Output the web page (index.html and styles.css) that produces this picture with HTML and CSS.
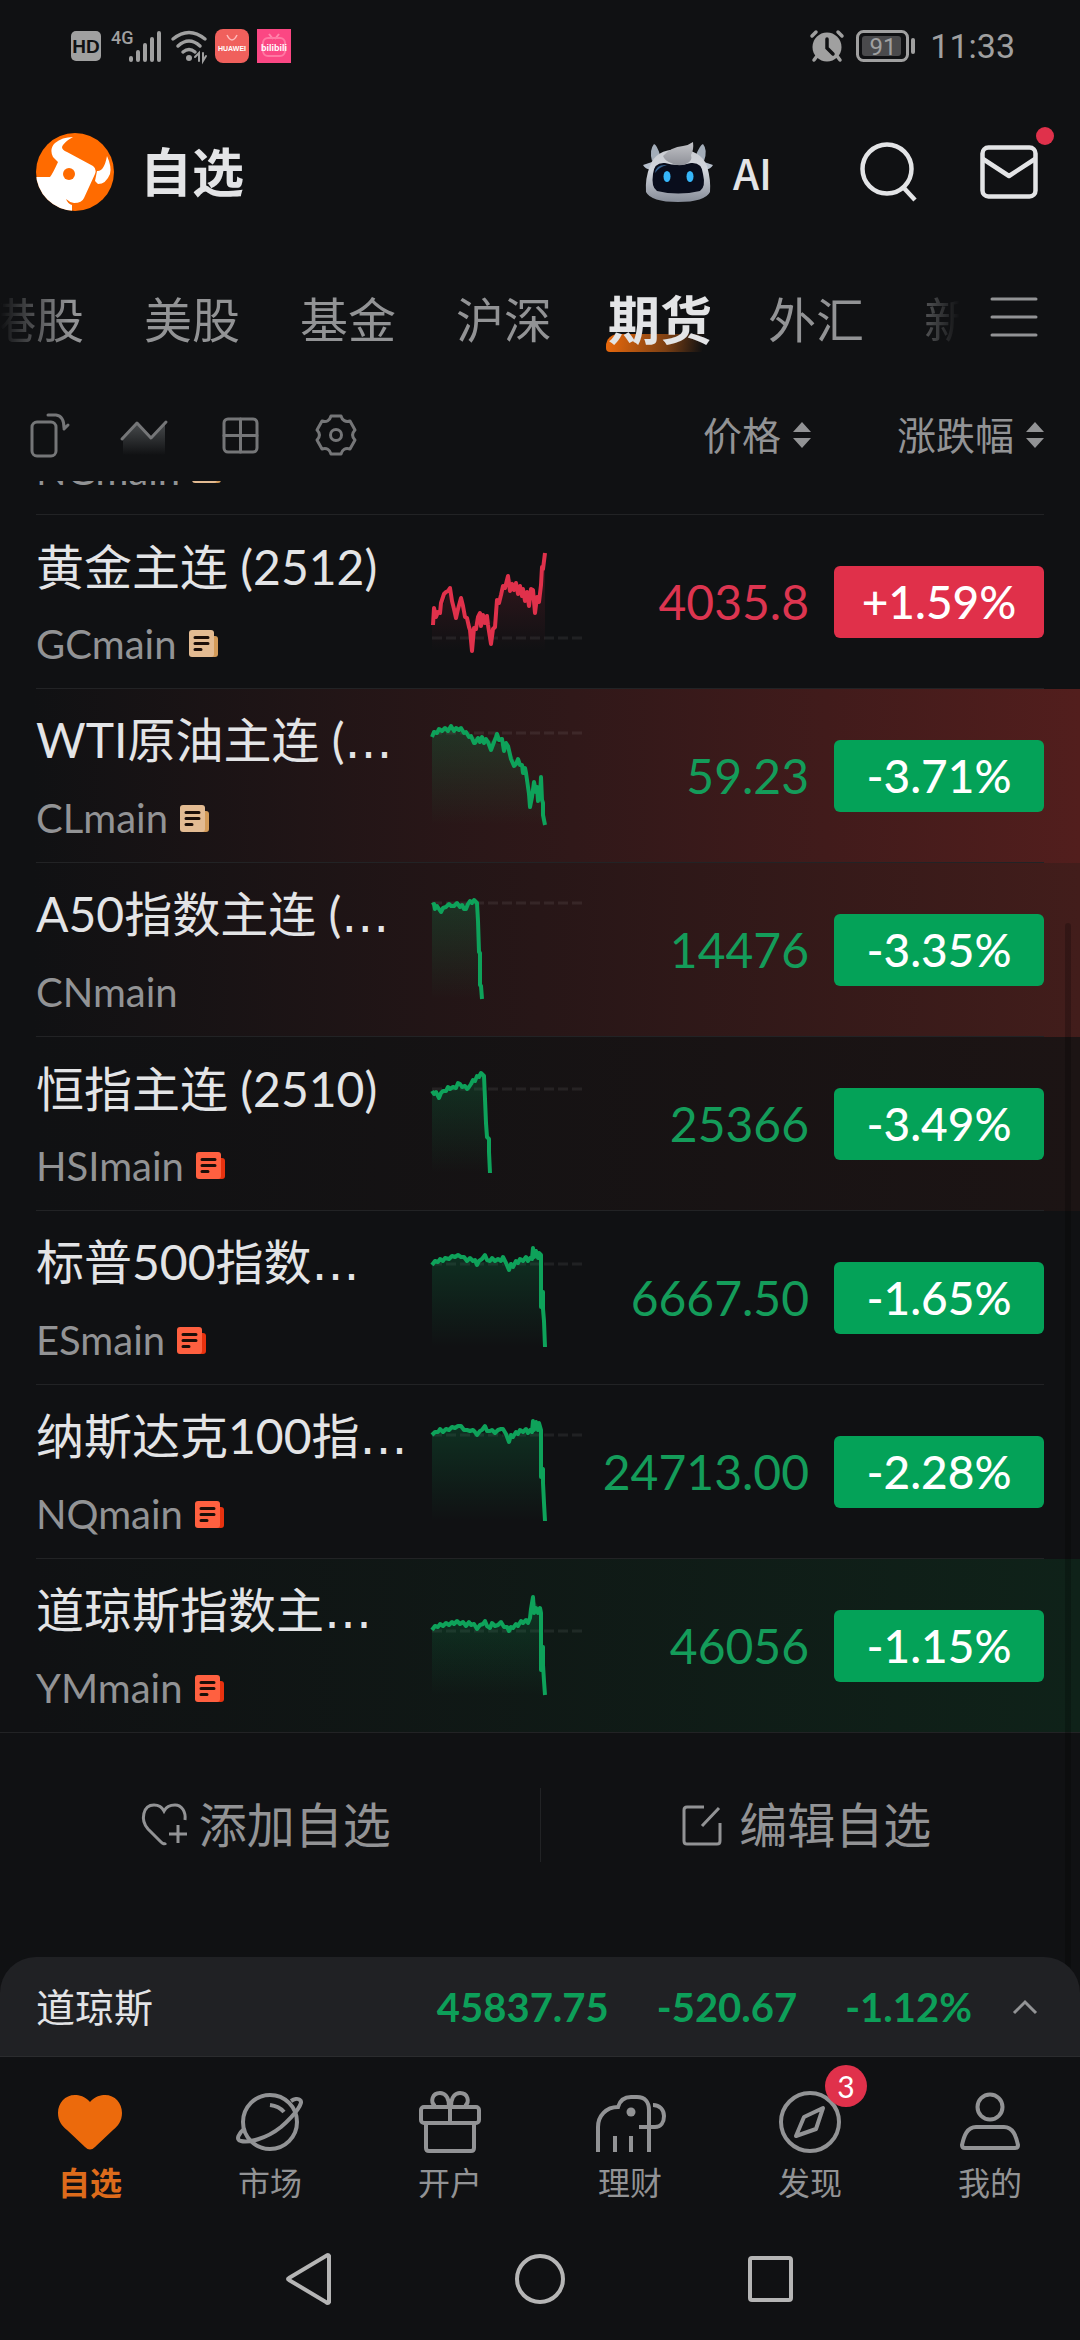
FILE: index.html
```html
<!DOCTYPE html>
<html lang="zh-CN">
<head>
<meta charset="utf-8">
<meta name="viewport" content="width=device-width, initial-scale=1">
<title>自选</title>
<link rel="stylesheet" href="styles.css">
</head>
<body>
<svg class="defs" width="0" height="0" aria-hidden="true">
  <defs>
    <linearGradient id="area-up" x1="0" y1="38" x2="0" y2="136" gradientUnits="userSpaceOnUse"><stop offset="0" stop-color="#e0314b" stop-opacity=".2"/><stop offset="1" stop-color="#e0314b" stop-opacity="0"/></linearGradient>
    <linearGradient id="area-down" x1="0" y1="38" x2="0" y2="136" gradientUnits="userSpaceOnUse"><stop offset="0" stop-color="#0aa257" stop-opacity=".22"/><stop offset="1" stop-color="#0aa257" stop-opacity="0"/></linearGradient>
    <symbol id="news" viewBox="0 0 29 27"><path class="news-back" d="M20 6h6q3 0 3 3v15q0 3-3 3h-6z"/><rect class="news-page" width="25" height="27" rx="3"/><path d="M6 7.500h13M6 13.500h13M6 19.500h6" stroke="#1c0e08" stroke-width="3" stroke-linecap="round"/></symbol>
    <symbol id="sorter" viewBox="0 0 18 26"><path d="M9 0l9 10H0zM9 26L0 16h18z" fill="#929395"/></symbol>
  </defs>
</svg>

<div class="status">
  <div class="status-group">
    <svg width="30" height="30" viewBox="0 0 30 30"><rect width="30" height="30" rx="5" fill="#a0a0a0"/><text x="15" y="22" text-anchor="middle" class="hd">HD</text></svg>
    <svg width="50" height="32" viewBox="0 0 50 32"><text x="0" y="14" class="net">4G</text><path d="M20 28v2M27 22v8M34 15v15M41 9v21M48 3v27" stroke="#a0a0a0" stroke-width="4" stroke-linecap="round"/></svg>
    <svg width="36" height="32" viewBox="0 0 36 32" fill="none" stroke="#a0a0a0" stroke-width="3.500" stroke-linecap="round"><path d="M2 9Q18-4 34 9M7 16Q18 6 29 16M12 22Q18 17 24 22"/><circle cx="18" cy="28" r="3" fill="#a0a0a0" stroke="none"/><path d="M24 27l4-4v8M32 23v8l3-5" stroke-width="2"/></svg>
  </div>
  <div class="status-group apps">
    <svg width="34" height="34" viewBox="0 0 34 34"><rect width="34" height="34" rx="8" fill="#f0605c"/><path d="M12 6q5 10 10 0" fill="none" stroke="#fbb" stroke-width="1.500"/><text x="17" y="22" text-anchor="middle" class="tiny">HUAWEI</text></svg>
    <svg width="34" height="34" viewBox="0 0 34 34"><path d="M0 0h34v34H0z" fill="#fb4783"/><path d="M12 5l4 5M22 5l-4 5" stroke="#ff86ac" stroke-width="2"/><rect x="6" y="9" width="22" height="18" rx="5" fill="none" stroke="#ff78a3" stroke-width="2"/><text x="17" y="22" text-anchor="middle" class="bili">bilibili</text></svg>
  </div>
  <div class="status-group end">
    <svg width="34" height="32" viewBox="0 0 34 32"><circle cx="17" cy="17" r="14.500" fill="#a0a0a0"/><path d="M2 6l4-4M32 6l-4-4M7 26l-3 4M27 26l3 4" stroke="#a0a0a0" stroke-width="3.500" stroke-linecap="round"/><path d="M17 9v9l6 6" fill="none" stroke="#101113" stroke-width="3.500" stroke-linecap="round"/></svg>
    <svg width="60" height="32" viewBox="0 0 60 32"><rect x="1.500" y="1.500" width="50" height="29" rx="6" fill="none" stroke="#a0a0a0" stroke-width="3"/><rect x="6" y="6" width="39" height="20" rx="3" fill="#4a4a4c"/><rect x="55" y="8" width="4" height="16" rx="2" fill="#a0a0a0"/><text x="27" y="25" text-anchor="middle" class="battery">91</text></svg>
    <span class="clock">11:33</span>
  </div>
</div>

<header class="header">
  <a href="#" class="logo" aria-label="账户">
    <svg width="78" height="78" viewBox="0 0 78 78"><defs><clipPath id="disc"><circle cx="39" cy="39" r="39"/></clipPath></defs><g clip-path="url(#disc)"><path d="M0 0h78v78H0z" fill="#ff6b00"/><path fill="#fff" d="M-1 44H14Q16 42 22 29L17 24Q13 16 19 10Q26 4 37 4Q28 9 26 14Q26 17 31 19L57 33Q61 36 59 41L48 65Q46 70 38 70Q33 69 30 66Q32 71 36 72V79H-1z"/><path fill="#fff" d="M71 23Q76 34 74 41Q70 51 62 51L59 48L61 38Q68 39 71 23z"/><circle cx="33" cy="41" r="6" fill="#ff6b00"/></g></svg>
  </a>
  <h1>自选</h1>
  <a href="#" class="ai">
    <svg width="70" height="60" viewBox="0 0 70 60"><defs><linearGradient id="shell" x1="0" y1="0" x2="0" y2="1"><stop offset="0" stop-color="#c9cbd0"/><stop offset=".4" stop-color="#d3d7de"/><stop offset="1" stop-color="#858b97"/></linearGradient><linearGradient id="tuft" x1="0" y1="0" x2="0" y2="1"><stop offset="0" stop-color="#c3c4c8"/><stop offset="1" stop-color="#8e9098"/></linearGradient></defs><path d="M9 19Q6 8 11 2Q14 3 17 13zM61 19Q65 8 60 2Q57 3 53 13z" fill="#a3adb9"/><path d="M9 20L0 23Q2 27 8 28zM61 20L70 23Q68 27 62 28z" fill="#b7c0cc"/><path d="M7 24Q12 8 35 7Q58 8 64 24Q68 38 67 50Q62 60 35 60Q8 60 3 50Q2 36 7 24z" fill="url(#shell)"/><path d="M10 32Q11 20 22 21Q35 25 48 21Q59 20 60 32Q63 45 57 49Q35 54 14 49Q8 45 10 32z" fill="#090d1c"/><path d="M12 31Q13 22 24 23Q16 25 12 31z" fill="#35618e"/><path d="M20 14Q28 5 40 4Q46 3 50 0Q51 8 48 13Q50 19 43 22Q35 25 28 21Q22 19 20 14z" fill="url(#tuft)"/><ellipse cx="24" cy="34.500" rx="3.500" ry="5.500" fill="#36b6fa"/><ellipse cx="47" cy="34.500" rx="3.500" ry="5.500" fill="#36b6fa"/></svg>
    <span>AI</span>
  </a>
  <button class="icon-button search" aria-label="搜索"><svg width="58" height="60" viewBox="0 0 58 60" fill="none" stroke="#e3e4e6" stroke-width="4.500"><circle cx="27" cy="27" r="24.500"/><path d="M43 45l12 13"/></svg></button>
  <button class="icon-button mail" aria-label="消息"><svg width="58" height="54" viewBox="0 0 58 54" fill="none" stroke="#e3e4e6" stroke-width="4.500"><rect x="2.500" y="2.500" width="53" height="49" rx="6"/><path d="M3 14l26 17 26-17" stroke-linejoin="round"/></svg><span class="dot"></span></button>
</header>

<nav class="tabs">
  <div class="tab-strip">
    <a href="#">港股</a><a href="#">美股</a><a href="#">基金</a><a href="#">沪深</a><a href="#" class="current"><span>期货</span></a><a href="#">外汇</a><a href="#">新股</a>
  </div>
  <button class="icon-button menu" aria-label="分组"><svg width="48" height="40" viewBox="0 0 48 40" stroke="#929395" stroke-width="3" stroke-linecap="round"><path d="M2 2h44M2 20h44M2 38h44"/></svg></button>
</nav>

<div class="toolbar">
  <div class="tools">
    <button class="icon-button" aria-label="横屏"><svg class="tool" viewBox="0 0 44 44"><rect x="4" y="9" width="24" height="34" rx="5"/><path d="M20 2h8q8 1 8 13M36 16l4-4"/></svg></button>
    <button class="icon-button" aria-label="走势"><svg class="tool" viewBox="0 0 44 44"><defs><linearGradient id="fade" x1="0" y1="0" x2="0" y2="1"><stop offset="0" stop-color="#484b4d"/><stop offset="1" stop-color="#101113"/></linearGradient></defs><path d="M-1 26L13 10 27 25 41 10V42H-1z" fill="url(#fade)" stroke="none"/><path d="M-2 26L13 10 27 25 42 9"/></svg></button>
    <button class="icon-button" aria-label="宫格"><svg class="tool" viewBox="0 0 44 44"><rect x="4" y="6" width="33" height="33" rx="4"/><path d="M20.500 6v33M4 22.500h33"/></svg></button>
    <button class="icon-button" aria-label="设置"><svg class="tool" viewBox="0 0 44 44"><path d="M15 3H25Q27 10 34 8L39 17Q34 22 39 27L34 36Q27 34 25 41H15Q13 34 6 36L1 27Q6 22 1 17L6 8Q13 10 15 3z"/><circle cx="20" cy="22" r="5.500"/></svg></button>
  </div>
  <button class="sort">价格<svg width="18" height="26"><use href="#sorter"/></svg></button>
  <button class="sort">涨跌幅<svg width="18" height="26"><use href="#sorter"/></svg></button>
</div>

<main class="list">
  <table class="quotes">
    <colgroup><col><col class="c-spark"><col class="c-price"><col class="c-change"></colgroup>
    <tbody>
      <tr>
        <td><a href="#" class="name">天然气主连</a><div class="code">NGmain<svg class="news gold"><use href="#news"/></svg></div></td><td></td><td></td><td></td>
      </tr>
      <tr class="up">
        <td><a href="#" class="name">黄金主连 (2512)</a><div class="code">GCmain<svg class="news gold"><use href="#news"/></svg></div></td>
        <td><svg class="spark" viewBox="0 0 152 174"><path class="base" d="M0 123H152"/><path class="area" d="M0 136V105L8 98 18 73 24 102 29 83 37 110 48 98 63 108 76 62 96 80 107 87 113 38V136z"/><path class="line" d="M1 110L2 93 4 102 6 97 8 98 9 88 10 85 12 79 14 77 16 76 18 73 20 86 22 94 24 103 26 94 29 83 31 91 33 102 35 103 37 112 38 115 40 136 42 113 44 114 46 102 48 98 49 111 51 100 53 108 55 101 56 110 59 129 61 114 63 112 65 85 67 88 69 80 71 71 73 73 76 61 78 76 80 69 82 75 84 68 86 79 88 71 90 81 91 74 93 86 95 77 97 91 99 74 101 75 103 98 105 82 107 87 109 70 110 52 111 54 113 38"/></svg></td>
        <td class="price">4035.8</td><td><span class="change">+1.59%</span></td>
      </tr>
      <tr class="glow-strong">
        <td><a href="#" class="name">WTI原油主连 (<i>…</i></a><div class="code">CLmain<svg class="news gold"><use href="#news"/></svg></div></td>
        <td><svg class="spark" viewBox="0 0 152 174"><path class="base" d="M0 44H152"/><path class="area" d="M0 136V47L19 39 37 47 54 50 74 57 91 84 98 118 110 111 113 136z"/><path class="line" d="M0 48L2 43 5 44 7 40 10 42 13 39 16 42 19 37 22 42 24 39 27 41 29 39 32 44 34 43 37 48 39 47 42 54 43 54 46 49 48 53 50 48 52 54 54 50 56 53 59 61 62 53 64 48 65 45 67 51 70 50 72 62 74 54 76 57 79 70 82 77 84 75 86 70 88 76 90 76 91 84 93 79 94 84 97 105 98 118 100 108 102 93 104 103 105 98 106 112 107 100 108 108 109 88 110 111 111 114 111 126 113 136"/></svg></td>
        <td class="price">59.23</td><td><span class="change">-3.71%</span></td>
      </tr>
      <tr class="glow-mid">
        <td><a href="#" class="name">A50指数主连 (<i>…</i></a><div class="code">CNmain</div></td>
        <td><svg class="spark" viewBox="0 0 152 174"><path class="base" d="M0 40H152"/><path class="area" d="M0 136V41L9 48 26 42 42 38 46 39 50 136z"/><path class="line" d="M0 42L2 41 3 46 5 43 7 46 9 49 11 45 14 44 17 41 19 43 22 43 25 40 28 44 30 42 32 46 34 46 36 41 38 38 40 40 42 37 45 40 46 58 47 89 48 90 48 122 49 123 50 136"/></svg></td>
        <td class="price">14476</td><td><span class="change">-3.35%</span></td>
      </tr>
      <tr class="glow-weak">
        <td><a href="#" class="name">恒指主连 (2510)</a><div class="code">HSImain<svg class="news"><use href="#news"/></svg></div></td>
        <td><svg class="spark" viewBox="0 0 152 174"><path class="base" d="M0 52H152"/><path class="area" d="M0 136V55L7 60 18 51 36 50 48 37 52 39 58 136z"/><path class="line" d="M0 54L2 57 4 55 7 61 9 56 11 54 14 54 16 50 18 52 21 50 24 51 26 46 28 47 30 50 33 49 35 52 37 50 39 47 41 43 43 44 45 39 47 40 49 36 52 39 53 62 54 86 55 100 57 102 57 115 58 136"/></svg></td>
        <td class="price">25366</td><td><span class="change">-3.49%</span></td>
      </tr>
      <tr>
        <td><a href="#" class="name">标普500指数<i>…</i></a><div class="code">ESmain<svg class="news"><use href="#news"/></svg></div></td>
        <td><svg class="spark" viewBox="0 0 152 174"><path class="base" d="M0 53H152"/><path class="area" d="M0 136V53L24 45 45 52 66 49 77 58 97 48 101 38 108 45 113 136z"/><path class="line" d="M0 54L3 50 6 51 8 48 11 50 13 47 17 48 20 45 23 46 26 44 29 46 32 46 35 50 38 47 41 50 43 49 45 54 47 50 50 48 53 44 55 49 58 50 60 47 63 50 66 48 69 50 71 46 74 52 77 59 79 53 81 56 84 50 86 52 88 48 91 50 94 46 96 50 98 47 100 48 101 37 102 46 104 40 106 47 107 42 109 44 109 96 111 81 111 98 112 110 113 136"/></svg></td>
        <td class="price">6667.50</td><td><span class="change">-1.65%</span></td>
      </tr>
      <tr>
        <td><a href="#" class="name">纳斯达克100指<i>…</i></a><div class="code">NQmain<svg class="news"><use href="#news"/></svg></div></td>
        <td><svg class="spark" viewBox="0 0 152 174"><path class="base" d="M0 50H152"/><path class="area" d="M0 136V49L28 41 45 48 66 47 77 55 97 46 101 38 108 43 113 136z"/><path class="line" d="M0 50L3 47 6 47 8 44 11 47 14 44 17 45 20 42 23 43 26 41 29 41 32 45 35 45 38 46 41 45 43 47 45 50 48 46 50 45 53 41 55 46 58 46 60 45 63 48 66 45 69 44 71 44 74 49 77 57 79 50 81 52 84 47 86 49 88 45 91 47 94 44 96 48 98 45 100 47 101 36 102 45 104 37 106 45 107 38 109 45 109 92 111 84 111 98 112 118 113 136"/></svg></td>
        <td class="price">24713.00</td><td><span class="change">-2.28%</span></td>
      </tr>
      <tr class="glow-green">
        <td><a href="#" class="name">道琼斯指数主<i>…</i></a><div class="code">YMmain<svg class="news"><use href="#news"/></svg></div></td>
        <td><svg class="spark" viewBox="0 0 152 174"><path class="base" d="M0 72H152"/><path class="area" d="M0 136V70L28 63 45 67 66 65 77 71 97 61 101 40 108 50 113 136z"/><path class="line" d="M0 71L3 67 6 68 8 65 11 67 14 64 17 66 20 63 22 65 25 62 28 65 31 63 34 67 37 63 39 66 42 65 45 70 48 66 51 65 53 62 55 67 58 69 60 64 63 67 66 66 69 63 72 68 75 68 77 72 79 68 81 69 84 65 86 67 89 62 91 64 94 61 96 64 98 59 99 50 101 38 102 54 104 49 106 54 108 49 109 54 109 111 111 88 111 106 112 122 113 136"/></svg></td>
        <td class="price">46056</td><td><span class="change">-1.15%</span></td>
      </tr>
    </tbody>
  </table>
</main>

<div class="actions">
  <button><svg width="48" height="44" viewBox="0 0 48 44" fill="none" stroke="#929395" stroke-width="3"><path d="M25 40Q23 42 20 39L7 26C-1 17 2 2 13 2C18 2 21 4 23 8C25 4 29 2 34 2C41 2 45 9 44 17M37 22v18M28 31h18"/></svg>添加自选</button>
  <button><svg width="48" height="44" viewBox="0 0 48 44" fill="none" stroke="#929395" stroke-width="3"><path d="M23 4H6Q3 4 3 7V38Q3 41 6 41H36Q39 41 39 38V20M21 23L38 5"/></svg>编辑自选</button>
</div>

<footer class="bottom">
  <a href="#" class="ticker">
    <span class="ticker-name">道琼斯</span><b>45837.75</b><b>-520.67</b><b>-1.12%</b>
    <svg width="26" height="16" viewBox="0 0 26 16" fill="none" stroke="#929395" stroke-width="3"><path d="M2 14L13 3l11 11"/></svg>
  </a>
  <nav class="tabbar">
    <a href="#" class="active"><svg viewBox="0 0 64 64"><path d="M32 12C27 6 21 5 17 5C7 5 0 13 0 23C0 31 4 36 9 40L27 57Q32 62 37 57L55 40C60 36 64 31 64 23C64 13 57 5 47 5C43 5 37 6 32 12Z" fill="#ec6a0c" stroke="none"/></svg>自选</a>
    <a href="#"><svg viewBox="0 0 64 64"><circle cx="32" cy="32" r="27"/><path d="M7 38C1 43-3 50 3 51C10 53 28 49 43 37C58 24 66 12 62 10C60 8 56 9 53 11M32 15Q41 16 46 22"/></svg>市场</a>
    <a href="#"><svg viewBox="0 0 64 64"><rect x="3" y="17" width="58" height="16" rx="3"/><path d="M8 33v25q0 3 3 3h42q3 0 3-3V33M32 17v16M31 17C31 6 26 3 22 3C14 3 12 12 17 16M33 17C33 6 38 3 42 3C50 3 52 12 47 16"/></svg>开户</a>
    <a href="#"><svg viewBox="0 0 64 64"><path d="M0 62V37C0 26 8 17 20 17C22 10 27 7 33 7h6C47 7 51 12 51 20V62M17 46v16M33 46v16M41 37H57C63 37 66 32 66 26C66 20 62 15 55 15"/><circle cx="33" cy="22" r="4.500" fill="#929395" stroke="none"/></svg>理财</a>
    <a href="#"><span class="badged"><svg viewBox="0 0 64 64"><circle cx="32" cy="32" r="29"/><path d="M45 18L38 39 18 46 26 27z" stroke-linejoin="round"/></svg><span class="badge">3</span></span>发现</a>
    <a href="#"><svg viewBox="0 0 64 64"><circle cx="32" cy="17" r="12.500"/><path d="M18 37H46C55 37 58 46 60 55Q60 58 57 58H7Q4 58 4 55C6 46 9 37 18 37Z"/></svg>我的</a>
  </nav>
  <div class="sysnav">
    <button class="icon-button" aria-label="返回"><svg width="52" height="52" viewBox="0 0 52 52"><path d="M46 3V49Q45 51 43 49L6 27Q4 26 6 25L43 3Q45 1 46 3z"/></svg></button>
    <button class="icon-button" aria-label="主页"><svg width="52" height="52" viewBox="0 0 52 52"><circle cx="26" cy="26" r="23"/></svg></button>
    <button class="icon-button" aria-label="最近"><svg width="52" height="52" viewBox="0 0 52 52"><rect x="5" y="5" width="41" height="42" rx="2"/></svg></button>
  </div>
</footer>
<div class="scrollbar"></div>
</body>
</html>
```

FILE: styles.css
```css
* { box-sizing: border-box; }

body {
  margin: 0;
  min-height: 100vh;
  display: flex;
  flex-direction: column;
  position: relative;
  background: #101113;
  color: #e3e4e6;
  font-family: Lato, "Noto Sans CJK SC", sans-serif;
}

a { color: inherit; text-decoration: none; }
button { padding: 0; border: 0; background: none; color: inherit; font: inherit; }
svg { display: block; flex: none; overflow: visible; }
.defs { position: absolute; }
.icon-button { display: block; position: relative; }

/* Status bar */
.status { display: flex; align-items: center; height: 92px; padding: 0 65px 0 71px; color: #a0a0a0; }
.status-group { display: flex; align-items: center; gap: 10px; }
.apps { gap: 8px; margin-left: 8px; }
.end { gap: 12px; margin-left: auto; }
.clock { font: 34px/40px Roboto, sans-serif; margin-left: 2px; }
.hd { font: 700 19px "Liberation Sans", sans-serif; fill: #101113; }
.net { font: 500 18px Roboto, sans-serif; fill: #a0a0a0; }
.battery { font: 24px Roboto, sans-serif; fill: #a0a0a0; }
.tiny { font: 700 7px "Liberation Sans", sans-serif; fill: #fff; }
.bili { font: 700 9px "Liberation Sans", sans-serif; fill: #fff; }

/* Header */
.header { display: flex; align-items: center; height: 160px; padding: 0 42px 0 36px; }
h1 { margin: 0 auto 0 26px; font-size: 52px; line-height: 64px; font-weight: 700; }
.ai { display: flex; align-items: center; gap: 20px; font: 500 42px/56px "Noto Sans CJK SC", sans-serif; }
.search { margin-left: 88px; }
.mail { margin-left: 62px; }
.dot { position: absolute; right: -16px; top: -18px; width: 18px; height: 18px; border-radius: 50%; background: #e0314b; }

/* Group tabs */
.tabs { display: flex; align-items: center; height: 136px; padding-right: 42px; }
.tab-strip {
  flex: 1;
  min-width: 0;
  display: flex;
  gap: 60px;
  overflow: hidden;
  color: #929395;
  font-size: 48px;
  line-height: 72px;
  white-space: nowrap;
  -webkit-mask-image: linear-gradient(90deg, transparent, #000 70px, #000 calc(100% - 100px), transparent calc(100% - 30px));
  mask-image: linear-gradient(90deg, transparent, #000 70px, #000 calc(100% - 100px), transparent calc(100% - 30px));
}
.tab-strip a { flex: none; }
.tab-strip a:first-child { margin-left: -12px; }
.tab-strip .current { position: relative; margin: 0 -4px; color: #e3e4e6; font-size: 52px; font-weight: 700; }
.current span { position: relative; }
.current::before {
  content: "";
  position: absolute;
  left: -2px;
  right: 4px;
  bottom: 4px;
  height: 18px;
  border-radius: 12px 0 0 4px;
  background: linear-gradient(100deg, #ec6a0c, #7a3f14 60%, rgba(16, 17, 19, 0) 95%);
}
.menu { padding-bottom: 6px; }

/* Display tools and sort headings */
.toolbar { display: flex; align-items: center; height: 93px; padding: 0 36px 0 28px; }
.tools { display: flex; gap: 52px; margin-right: auto; }
.tool { width: 44px; height: 44px; fill: none; stroke: #757678; stroke-width: 3; stroke-linecap: round; stroke-linejoin: round; }
.sort { display: flex; align-items: center; gap: 12px; margin-left: 86px; color: #929395; font-size: 39px; line-height: 56px; }

/* Quote list */
.list { overflow: hidden; }
.quotes { width: 100%; margin-top: -140px; border-collapse: collapse; table-layout: fixed; }
.c-spark { width: 152px; }
.c-price { width: 225px; }
.c-change { width: 271px; }
tr {
  --glow: none;
  height: 174px;
  background: linear-gradient(#222325, #222325) center bottom / calc(100% - 72px) 1px no-repeat, var(--glow);
}
tr:last-child { background-size: 100% 1px, auto; }
.glow-strong { --glow: linear-gradient(90deg, #101113 3%, #301819 53%, #521e1d); }
.glow-mid { --glow: linear-gradient(90deg, #101113 3%, #271617 50%, #421d1b); }
.glow-weak { --glow: linear-gradient(90deg, #101113 3%, #1c1414); }
.glow-green { --glow: linear-gradient(90deg, #101113 3%, #0f2219); }
td { padding: 0; vertical-align: middle; }
td:first-child { padding-left: 36px; }
.name { display: block; font-size: 48px; line-height: 60px; white-space: nowrap; }
.name i { font-family: "DejaVu Sans", sans-serif; font-style: normal; }
.code { display: flex; align-items: center; gap: 12px; margin-top: 23px; color: #929395; font-size: 40px; line-height: 48px; }
.news { width: 29px; height: 27px; --page: #ff6040; --back: #e8320f; }
.news.gold { --page: #e3bb92; --back: #d39b59; }
.news-page { fill: var(--page); }
.news-back { fill: var(--back); }
.spark { width: 152px; height: 174px; }
.line { fill: none; stroke: #0ea25a; stroke-width: 4; stroke-linejoin: round; }
.area { fill: url(#area-down); }
.base { stroke: #fff; stroke-opacity: .07; stroke-width: 3; stroke-dasharray: 10 4; }
.up .line { stroke: #e0314b; }
.up .area { fill: url(#area-up); }
.price { color: #149c5a; font-size: 48px; line-height: 60px; text-align: right; }
.up .price { color: #dc3550; }
.change {
  display: block;
  margin: 0 36px 0 25px;
  border-radius: 6px;
  background: #04a258;
  color: #fff;
  font-size: 46px;
  line-height: 72px;
  font-weight: 500;
  text-align: center;
}
.up .change { background: #e0304a; }
.scrollbar { position: absolute; right: 9px; top: 923px; bottom: 360px; width: 6px; border-radius: 3px; background: rgba(0, 0, 0, .22); }

/* List actions */
.actions { display: flex; align-items: center; height: 184px; color: #929395; }
.actions button { flex: 1; display: flex; justify-content: center; align-items: center; gap: 10px; padding-right: 8px; font-size: 48px; line-height: 74px; }
.actions button + button { border-left: 1px solid #222325; }

/* Index ticker, tab bar and system keys */
.bottom { margin-top: auto; position: relative; z-index: 1; }
.ticker {
  display: flex;
  align-items: center;
  gap: 48px;
  height: 100px;
  padding: 0 42px 0 36px;
  border-bottom: 1px solid #2b2c2e;
  border-radius: 36px 36px 0 0;
  background: #202124;
}
.ticker-name { margin-right: auto; font-size: 39px; line-height: 56px; }
.ticker b { color: #0d9f59; font-size: 40px; line-height: 56px; }
.ticker svg { margin-left: -8px; }
.tabbar { display: flex; height: 161px; padding-top: 33px; }
.tabbar a { flex: 1; display: flex; flex-direction: column; align-items: center; gap: 9px; color: #929395; font-size: 32px; line-height: 40px; }
.tabbar svg { width: 64px; height: 64px; fill: none; stroke: #929395; stroke-width: 4; }
.tabbar .active { color: #dd6b1b; font-weight: 700; }
.badged { position: relative; }
.badge {
  position: absolute;
  left: 47px;
  top: -25px;
  width: 42px;
  height: 42px;
  border-radius: 50%;
  background: #e0314b;
  color: #fff;
  font-size: 30px;
  line-height: 42px;
  text-align: center;
}
.sysnav { display: flex; justify-content: center; align-items: center; gap: 179px; height: 122px; }
.sysnav svg { fill: none; stroke: #b5b5b5; stroke-width: 4; }
```
